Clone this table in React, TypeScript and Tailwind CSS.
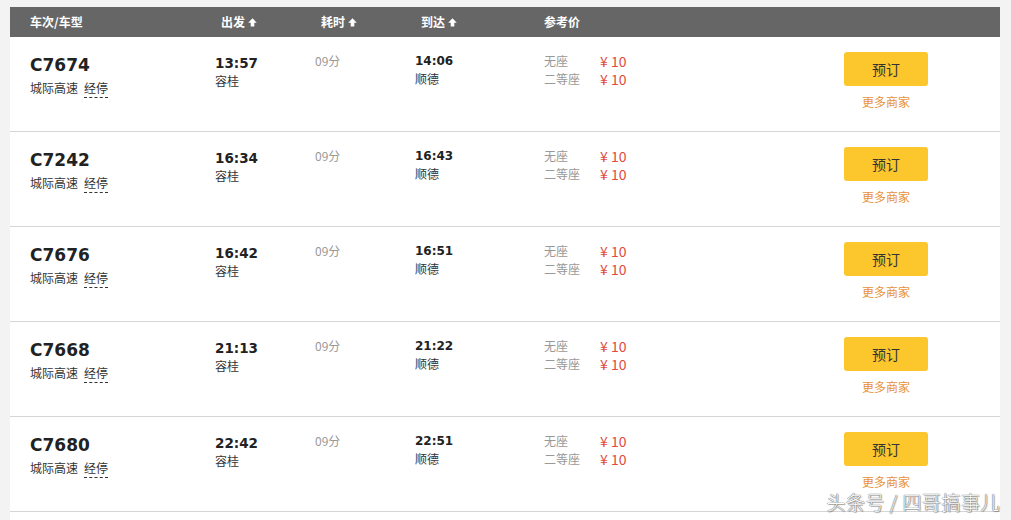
import React from "react";

const trains = [
  { no: "C7674", dep: "13:57", arr: "14:06" },
  { no: "C7242", dep: "16:34", arr: "16:43" },
  { no: "C7676", dep: "16:42", arr: "16:51" },
  { no: "C7668", dep: "21:13", arr: "21:22" },
  { no: "C7680", dep: "22:42", arr: "22:51" },
];

const cjk = "font-['Noto_Sans_CJK_SC',sans-serif]";
const latin = "font-['DejaVu_Sans','Noto_Sans_CJK_SC',sans-serif]";

function SortArrow() {
  return (
    <svg width="9" height="9" viewBox="0 0 8 8" className="ml-[3px] inline-block">
      <path d="M4 0.3 L7.8 4.2 L5.6 4.2 L5.6 7.6 L2.4 7.6 L2.4 4.2 L0.2 4.2 Z" fill="#fff" />
    </svg>
  );
}

function Row({ no, dep, arr }: { no: string; dep: string; arr: string }) {
  return (
    <div className="flex h-[95px] border-b border-[#d6d6d6] bg-white">
      <div className="w-[205px] pl-[20px] pt-[18px]">
        <div className={`${latin} text-[17px] font-extrabold leading-[21px] text-[#222]`}>{no}</div>
        <div className={`${cjk} mt-[3px] text-[12px] leading-[18px] text-[#333]`}>
          城际高速
          <span className="ml-[6px] border-b border-dashed border-[#333] pb-[1px]">经停</span>
        </div>
      </div>
      <div className="w-[100px] pt-[17px]">
        <div className={`${latin} text-[13.5px] font-bold leading-[18px] text-[#222]`}>{dep}</div>
        <div className={`${cjk} text-[12px] leading-[18px] text-[#333]`}>容桂</div>
      </div>
      <div className={`${cjk} w-[100px] pt-[15px] text-[12px] leading-[18px] text-[#999]`}>09分</div>
      <div className="w-[129px] pt-[15px]">
        <div className={`${latin} text-[12px] font-bold leading-[18px] text-[#222]`}>{arr}</div>
        <div className={`${cjk} text-[12px] leading-[18px] text-[#333]`}>顺德</div>
      </div>
      <div className="w-[300px] pt-[15px]">
        {["无座", "二等座"].map((s) => (
          <div key={s} className="flex h-[18px] items-center">
            <span className={`${cjk} w-[56px] text-[12px] text-[#999]`}>{s}</span>
            <span className={`${cjk} text-[14px] text-[#e04a3e]`}>¥ 10</span>
          </div>
        ))}
      </div>
      <div className="flex w-[84px] flex-col items-center pt-[15px]">
        <div
          className={`${cjk} flex h-[34px] w-[84px] items-center justify-center rounded-[3px] bg-[#fcc62d] text-[14px] text-[#333]`}
        >
          预订
        </div>
        <div className={`${cjk} mt-[9px] text-[12px] leading-[14px] text-[#e8923a]`}>更多商家</div>
      </div>
    </div>
  );
}

export default function App() {
  return (
    <div className="relative h-[520px] w-[1011px] overflow-hidden bg-[#f3f3f3] pt-[7px]">
      <div className="ml-[10px] w-[990px] bg-white">
        <div className={`${cjk} flex h-[30px] items-center bg-[#666] text-[12px] font-bold text-white`}>
          <div className="w-[211px] pl-[20px]">车次/车型</div>
          <div className="flex w-[100px] items-center">
            出发
            <SortArrow />
          </div>
          <div className="flex w-[100px] items-center">
            耗时
            <SortArrow />
          </div>
          <div className="flex w-[123px] items-center">
            到达
            <SortArrow />
          </div>
          <div>参考价</div>
        </div>
        {trains.map((t) => (
          <Row key={t.no} {...t} />
        ))}
        <div className="h-[20px] bg-white" />
      </div>
      <div
        className={`${cjk} absolute right-[11px] top-[488px] text-[19px] font-light tracking-[0.5px] text-white [text-shadow:0_0_1px_#555,0_0_1px_#555,1px_1px_1px_rgba(0,0,0,0.3)]`}
      >
        头条号 / 四哥搞事儿
      </div>
    </div>
  );
}
